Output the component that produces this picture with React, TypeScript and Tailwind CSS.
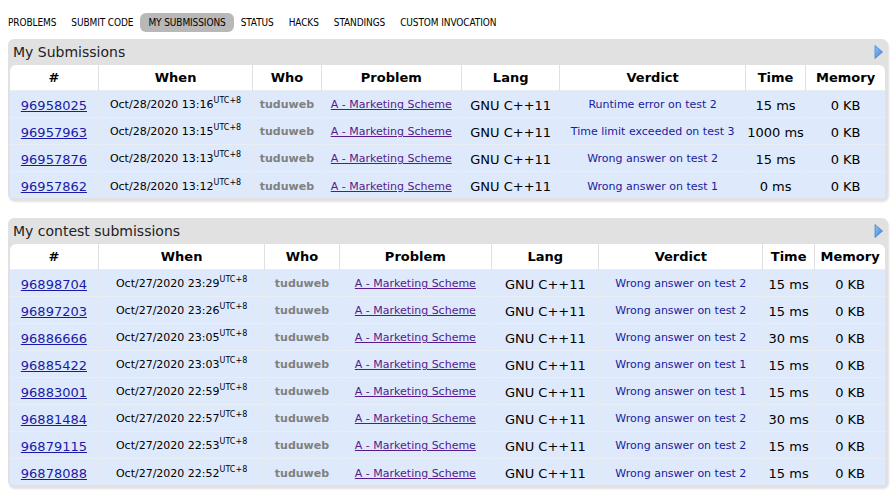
import React from 'react';

type Row = {
  id: string;
  when: string;
  verdict: string;
  time: string;
};

const recent: Row[] = [
  { id: '96958025', when: 'Oct/28/2020 13:16', verdict: 'Runtime error on test 2', time: '15 ms' },
  { id: '96957963', when: 'Oct/28/2020 13:15', verdict: 'Time limit exceeded on test 3', time: '1000 ms' },
  { id: '96957876', when: 'Oct/28/2020 13:13', verdict: 'Wrong answer on test 2', time: '15 ms' },
  { id: '96957862', when: 'Oct/28/2020 13:12', verdict: 'Wrong answer on test 1', time: '0 ms' },
];

const contest: Row[] = [
  { id: '96898704', when: 'Oct/27/2020 23:29', verdict: 'Wrong answer on test 2', time: '15 ms' },
  { id: '96897203', when: 'Oct/27/2020 23:26', verdict: 'Wrong answer on test 2', time: '15 ms' },
  { id: '96886666', when: 'Oct/27/2020 23:05', verdict: 'Wrong answer on test 2', time: '30 ms' },
  { id: '96885422', when: 'Oct/27/2020 23:03', verdict: 'Wrong answer on test 1', time: '15 ms' },
  { id: '96883001', when: 'Oct/27/2020 22:59', verdict: 'Wrong answer on test 1', time: '15 ms' },
  { id: '96881484', when: 'Oct/27/2020 22:57', verdict: 'Wrong answer on test 2', time: '30 ms' },
  { id: '96879115', when: 'Oct/27/2020 22:53', verdict: 'Wrong answer on test 2', time: '15 ms' },
  { id: '96878088', when: 'Oct/27/2020 22:52', verdict: 'Wrong answer on test 2', time: '15 ms' },
];

const tabs = ['PROBLEMS', 'SUBMIT CODE', 'MY SUBMISSIONS', 'STATUS', 'HACKS', 'STANDINGS', 'CUSTOM INVOCATION'];

const heads = ['#', 'When', 'Who', 'Problem', 'Lang', 'Verdict', 'Time', 'Memory'];

function Arrow() {
  return (
    <svg width="9" height="14" viewBox="0 0 9 14" className="block">
      <defs>
        <linearGradient id="arr" x1="0" y1="0" x2="1" y2="1">
          <stop offset="0" stopColor="#9cc6f2" />
          <stop offset="1" stopColor="#2f7fd6" />
        </linearGradient>
      </defs>
      <path d="M1 0.5 L8.5 7 L1 13.5 Z" fill="url(#arr)" stroke="#3d86d4" strokeWidth="0.8" />
    </svg>
  );
}

function SubmissionBox({ title, rows, widths }: { title: string; rows: Row[]; widths: number[] }) {
  return (
    <div className="mx-2 rounded-md bg-[#e1e1e1] pb-[2px] pl-[2px] pr-[3px] shadow-[1px_2px_2px_rgba(0,0,0,0.12)]">
      <div className="flex h-[26px] items-center justify-between pl-[3px] pr-[2px]">
        <span className="text-[14px] text-[#222]">{title}</span>
        <Arrow />
      </div>
      <table className="w-full table-fixed border-collapse overflow-hidden rounded-t-md">
        <colgroup>
          {widths.map((w, i) => (
            <col key={i} style={{ width: w }} />
          ))}
        </colgroup>
        <thead>
          <tr className="h-[25px] bg-white">
            {heads.map((h, i) => (
              <th
                key={h}
                className={`text-[13px] font-bold text-black ${i < heads.length - 1 ? 'border-r border-[#e1e1e1]' : ''}`}
              >
                {h}
              </th>
            ))}
          </tr>
        </thead>
        <tbody>
          {rows.map((r) => (
            <tr key={r.id} className="h-[27px] border-t border-[#e9eef5] bg-[#deeafb] text-center [&>td]:pt-[4px]">
              <td className="border-r border-[#e4e9f0] text-[13px]">
                <a className="text-[#1a1aa6] underline">{r.id}</a>
              </td>
              <td className="border-r border-[#e4e9f0] text-[11px] text-black">
                {r.when}
                <sup className="relative -top-[5px] align-baseline text-[8px]">UTC+8</sup>
              </td>
              <td className="border-r border-[#e4e9f0] text-[11px] font-bold text-[#808080]">tuduweb</td>
              <td className="border-r border-[#e4e9f0] text-[11px]">
                <a className="text-[#551a8b] underline">A - Marketing Scheme</a>
              </td>
              <td className="border-r border-[#e4e9f0] text-[13px] text-black">GNU C++11</td>
              <td className="border-r border-[#e4e9f0] text-[11px] text-[#1a1a9c]">{r.verdict}</td>
              <td className="border-r border-[#e4e9f0] text-[13px] text-black">{r.time}</td>
              <td className="text-[13px] text-black">0 KB</td>
            </tr>
          ))}
        </tbody>
      </table>
    </div>
  );
}

export default function App() {
  return (
    <div className="min-h-[497px] w-[896px] bg-white font-['DejaVu_Sans',Verdana,sans-serif]">
      <nav className="flex items-center gap-[15px] px-2 pt-[13px] font-['DejaVu_Sans_Condensed','DejaVu_Sans',sans-serif] text-[10px] font-medium tracking-[-0.1px] text-black [font-stretch:condensed]">
        {tabs.map((t) => (
          <span
            key={t}
            className={
              t === 'MY SUBMISSIONS'
                ? '-mx-[8px] rounded-md bg-[#b8b8b8] px-[8px] py-[2px] leading-[15px]'
                : 'py-[2px] leading-[15px]'
            }
          >
            {t}
          </span>
        ))}
      </nav>
      <div className="mt-[7px] flex flex-col gap-[18px]">
        <SubmissionBox title="My Submissions" rows={recent} widths={[88, 154, 68, 140, 98, 185, 60, 79]} />
        <SubmissionBox title="My contest submissions" rows={contest} widths={[88, 166, 74, 152, 107, 163, 52, 70]} />
      </div>
    </div>
  );
}
